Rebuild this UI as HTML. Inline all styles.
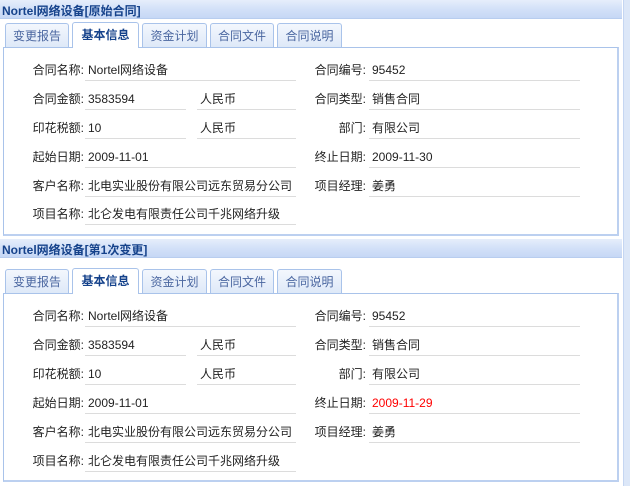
<!DOCTYPE html>
<html><head><meta charset="utf-8"><style>
*{margin:0;padding:0;box-sizing:border-box}
body{width:630px;height:486px;overflow:hidden;background:#fff;font-family:"Liberation Sans","Noto Sans CJK SC",sans-serif;font-size:12px;color:#222;position:relative}
.a{position:absolute}
.hdr{position:absolute;left:0;width:622px;height:19px;background:linear-gradient(#e6eefb,#d3e1f8 50%,#c6d8f5);border-bottom:1px solid #b8cdef}
.hdr span{position:absolute;left:2px;top:2px;font-weight:bold;color:#15428b;font-size:12px}
.tab{position:absolute;height:25px;border:1px solid #a9c3ea;border-bottom:none;border-radius:3px 3px 0 0;background:linear-gradient(#f3f7fd,#dde8f8);color:#4a66a0;text-align:center;line-height:24px;font-size:12px}
.tab.on{background:#fff;color:#15428b;font-weight:bold;height:26px;z-index:2}
.panel{position:absolute;left:3px;width:616px;border:1px solid #a9c3ea;border-right:2px solid #bcd0f0;border-bottom:2px solid #bcd0f0;background:#fff}
.l{position:absolute;width:60px;text-align:right;line-height:14px}
.v{position:absolute;line-height:14px}
.u{position:absolute;height:1px;background:#dcdcdc}
.sb{position:absolute;left:623px;top:0;width:7px;height:486px;background:#dce7f8;border-left:1px solid #c5d6f2}
</style></head><body>
<div class="sb"></div>

<div class="hdr" style="top:0"><span>Nortel网络设备[原始合同]</span></div>
<div class="tab" style="left:5px;top:23px;width:64px">变更报告</div>
<div class="tab on" style="left:72px;top:22px;width:67px">基本信息</div>
<div class="tab" style="left:142px;top:23px;width:65px">资金计划</div>
<div class="tab" style="left:210px;top:23px;width:64px">合同文件</div>
<div class="tab" style="left:277px;top:23px;width:65px">合同说明</div>
<div class="panel" style="top:47px;height:189px"></div>

<div class="hdr" style="top:239px"><span>Nortel网络设备[第1次变更]</span></div>
<div class="tab" style="left:5px;top:269px;width:64px">变更报告</div>
<div class="tab on" style="left:72px;top:268px;width:67px">基本信息</div>
<div class="tab" style="left:142px;top:269px;width:65px">资金计划</div>
<div class="tab" style="left:210px;top:269px;width:64px">合同文件</div>
<div class="tab" style="left:277px;top:269px;width:65px">合同说明</div>
<div class="panel" style="top:293px;height:189px"></div>

<!-- panel 1 rows -->
<div class="l" style="left:24px;top:63px">合同名称:</div><div class="v" style="left:88px;top:63px">Nortel网络设备</div><div class="u" style="left:85px;top:80px;width:211px"></div>
<div class="l" style="left:306px;top:63px">合同编号:</div><div class="v" style="left:372px;top:63px">95452</div><div class="u" style="left:369px;top:80px;width:211px"></div>

<div class="l" style="left:24px;top:92px">合同金额:</div><div class="v" style="left:88px;top:92px">3583594</div><div class="u" style="left:85px;top:109px;width:101px"></div>
<div class="v" style="left:200px;top:92px">人民币</div><div class="u" style="left:197px;top:109px;width:99px"></div>
<div class="l" style="left:306px;top:92px">合同类型:</div><div class="v" style="left:372px;top:92px">销售合同</div><div class="u" style="left:369px;top:109px;width:211px"></div>

<div class="l" style="left:24px;top:121px">印花税额:</div><div class="v" style="left:88px;top:121px">10</div><div class="u" style="left:85px;top:138px;width:101px"></div>
<div class="v" style="left:200px;top:121px">人民币</div><div class="u" style="left:197px;top:138px;width:99px"></div>
<div class="l" style="left:306px;top:121px">部门:</div><div class="v" style="left:372px;top:121px">有限公司</div><div class="u" style="left:369px;top:138px;width:211px"></div>

<div class="l" style="left:24px;top:150px">起始日期:</div><div class="v" style="left:88px;top:150px">2009-11-01</div><div class="u" style="left:85px;top:167px;width:211px"></div>
<div class="l" style="left:306px;top:150px">终止日期:</div><div class="v" style="left:372px;top:150px">2009-11-30</div><div class="u" style="left:369px;top:167px;width:211px"></div>

<div class="l" style="left:24px;top:179px">客户名称:</div><div class="v" style="left:88px;top:179px">北电实业股份有限公司远东贸易分公司</div><div class="u" style="left:85px;top:196px;width:211px"></div>
<div class="l" style="left:306px;top:179px">项目经理:</div><div class="v" style="left:372px;top:179px">姜勇</div><div class="u" style="left:369px;top:196px;width:211px"></div>

<div class="l" style="left:24px;top:207px">项目名称:</div><div class="v" style="left:88px;top:207px">北仑发电有限责任公司千兆网络升级</div><div class="u" style="left:85px;top:224px;width:211px"></div>

<!-- panel 2 rows -->
<div class="l" style="left:24px;top:309px">合同名称:</div><div class="v" style="left:88px;top:309px">Nortel网络设备</div><div class="u" style="left:85px;top:326px;width:211px"></div>
<div class="l" style="left:306px;top:309px">合同编号:</div><div class="v" style="left:372px;top:309px">95452</div><div class="u" style="left:369px;top:326px;width:211px"></div>

<div class="l" style="left:24px;top:338px">合同金额:</div><div class="v" style="left:88px;top:338px">3583594</div><div class="u" style="left:85px;top:355px;width:101px"></div>
<div class="v" style="left:200px;top:338px">人民币</div><div class="u" style="left:197px;top:355px;width:99px"></div>
<div class="l" style="left:306px;top:338px">合同类型:</div><div class="v" style="left:372px;top:338px">销售合同</div><div class="u" style="left:369px;top:355px;width:211px"></div>

<div class="l" style="left:24px;top:367px">印花税额:</div><div class="v" style="left:88px;top:367px">10</div><div class="u" style="left:85px;top:384px;width:101px"></div>
<div class="v" style="left:200px;top:367px">人民币</div><div class="u" style="left:197px;top:384px;width:99px"></div>
<div class="l" style="left:306px;top:367px">部门:</div><div class="v" style="left:372px;top:367px">有限公司</div><div class="u" style="left:369px;top:384px;width:211px"></div>

<div class="l" style="left:24px;top:396px">起始日期:</div><div class="v" style="left:88px;top:396px">2009-11-01</div><div class="u" style="left:85px;top:413px;width:211px"></div>
<div class="l" style="left:306px;top:396px">终止日期:</div><div class="v" style="left:372px;top:396px;color:#f00">2009-11-29</div><div class="u" style="left:369px;top:413px;width:211px"></div>

<div class="l" style="left:24px;top:425px">客户名称:</div><div class="v" style="left:88px;top:425px">北电实业股份有限公司远东贸易分公司</div><div class="u" style="left:85px;top:442px;width:211px"></div>
<div class="l" style="left:306px;top:425px">项目经理:</div><div class="v" style="left:372px;top:425px">姜勇</div><div class="u" style="left:369px;top:442px;width:211px"></div>

<div class="l" style="left:24px;top:454px">项目名称:</div><div class="v" style="left:88px;top:454px">北仑发电有限责任公司千兆网络升级</div><div class="u" style="left:85px;top:471px;width:211px"></div>
</body></html>
